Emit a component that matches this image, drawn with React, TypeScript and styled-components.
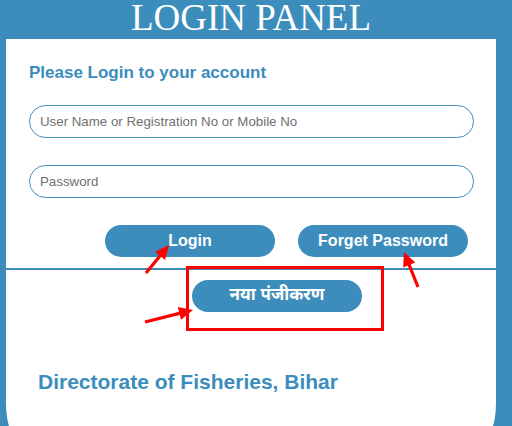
import React from "react";
import styled, { createGlobalStyle } from "styled-components";

const BLUE = "#3c8dbc";

const GlobalStyle = createGlobalStyle`
  html, body { margin: 0; padding: 0; }
  body {
    background: ${BLUE};
    font-family: "Liberation Sans", Arial, sans-serif;
    overflow: hidden;
  }
`;

const Page = styled.div`
  position: relative;
  width: 512px;
  height: 426px;
  overflow: hidden;
  background: ${BLUE};
`;

const Title = styled.h1`
  margin: 0 0 0 6px;
  width: 490px;
  height: 39px;
  line-height: 36px;
  text-align: center;
  font-family: "Liberation Serif", "Times New Roman", serif;
  font-weight: normal;
  font-size: 37px;
  color: #fff;
`;

const Panel = styled.div`
  margin-left: 6px;
  width: 490px;
  height: 404px;
  background: #fff;
  border-radius: 0 0 16px 16px / 0 0 40px 40px;
`;

const Form = styled.form`
  display: flex;
  flex-direction: column;
  padding: 24px 22px 0 23px;
`;

const Heading = styled.h2`
  margin: 0 0 22px;
  font-size: 17px;
  line-height: 20px;
  font-weight: bold;
  color: ${BLUE};
`;

const Field = styled.input<{ $gap?: number }>`
  display: block;
  box-sizing: border-box;
  width: 100%;
  height: 33px;
  margin: 0 0 ${(p) => p.$gap ?? 0}px;
  padding: 0 10px;
  border: 1px solid ${BLUE};
  border-radius: 17px;
  background: #fff;
  font-family: "Liberation Sans", Arial, sans-serif;
  font-size: 13.3px;
  color: #333;
  outline: none;
  &::placeholder { color: #707070; }
`;

const ButtonRow = styled.div`
  display: flex;
  gap: 23px;
  margin-top: 27px;
  padding-left: 76px;
`;

const PillButton = styled.button<{ $size?: number }>`
  width: 170px;
  height: 32px;
  padding: 0;
  border: none;
  border-radius: 16px;
  background: ${BLUE};
  color: #fff;
  font-family: "Liberation Sans", Arial, "Noto Sans Devanagari", "Nirmala UI", "Mangal", sans-serif;
  font-weight: bold;
  font-size: ${(p) => p.$size ?? 16}px;
  cursor: pointer;
`;

const Divider = styled.div`
  height: 2px;
  margin-top: 11px;
  background: ${BLUE};
`;

const RegisterRow = styled.div`
  display: flex;
  margin-top: 10px;
  padding-left: 186px;
`;

const Footer = styled.div`
  margin: 58px 0 0 32px;
  font-size: 21px;
  line-height: 24px;
  font-weight: bold;
  color: ${BLUE};
`;

const Annotations = styled.svg`
  position: absolute;
  left: 0;
  top: 0;
  pointer-events: none;
`;

type Pt = [number, number];

function Arrow({ from, to }: { from: Pt; to: Pt }) {
  const dx = to[0] - from[0];
  const dy = to[1] - from[1];
  const len = Math.hypot(dx, dy);
  const ux = dx / len;
  const uy = dy / len;
  const headLen = 14;
  const half = 6.5;
  const bx = to[0] - ux * headLen;
  const by = to[1] - uy * headLen;
  const px = -uy;
  const py = ux;
  const pts = [
    `${to[0]},${to[1]}`,
    `${bx + px * half},${by + py * half}`,
    `${bx - px * half},${by - py * half}`,
  ].join(" ");
  return (
    <g>
      <line x1={from[0]} y1={from[1]} x2={bx + ux * 2} y2={by + uy * 2} stroke="#f00" strokeWidth={3.2} />
      <polygon points={pts} fill="#f00" />
    </g>
  );
}

export default function App() {
  return (
    <Page>
      <GlobalStyle />
      <Title>LOGIN PANEL</Title>
      <Panel>
        <Form onSubmit={(e) => e.preventDefault()}>
          <Heading>Please Login to your account</Heading>
          <Field $gap={27} type="text" placeholder="User Name or Registration No or Mobile No" />
          <Field type="password" placeholder="Password" />
          <ButtonRow>
            <PillButton type="submit">Login</PillButton>
            <PillButton type="button">Forget Password</PillButton>
          </ButtonRow>
        </Form>
        <Divider />
        <RegisterRow>
          <PillButton type="button" $size={17}>नया पंजीकरण</PillButton>
        </RegisterRow>
        <Footer>Directorate of Fisheries, Bihar</Footer>
      </Panel>
      <Annotations width={512} height={426} viewBox="0 0 512 426">
        <rect x={187.5} y={267.5} width={195} height={62} fill="none" stroke="#f00" strokeWidth={3} />
        <Arrow from={[146, 273]} to={[169, 245]} />
        <Arrow from={[418, 287]} to={[404, 252]} />
        <Arrow from={[145, 322]} to={[193, 310]} />
      </Annotations>
    </Page>
  );
}
